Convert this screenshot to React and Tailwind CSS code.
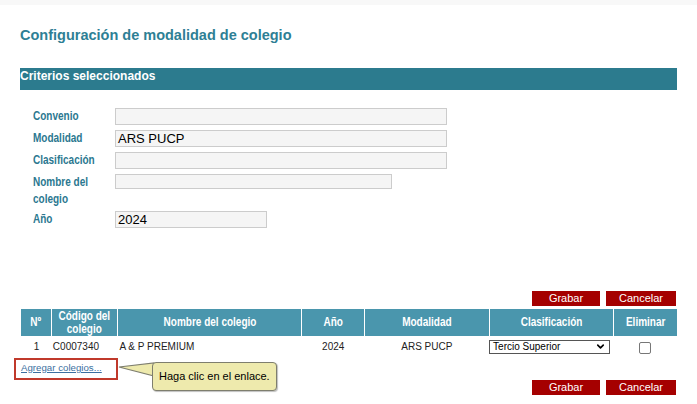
import { ChevronDown } from 'lucide-react'

const CAMPOS = [
  { label: 'Convenio', value: '', w: 'w-[332px]' },
  { label: 'Modalidad', value: 'ARS PUCP', w: 'w-[332px]' },
  { label: 'Clasificación', value: '', w: 'w-[332px]' },
  { label: ['Nombre del', 'colegio'], value: '', w: 'w-[277px]', small: true },
  { label: 'Año', value: '2024', w: 'w-[152px]' },
]

const COLUMNAS = [
  { label: ['Nº'], w: 'w-[31px]' },
  { label: ['Código del', 'colegio'], w: 'w-[64px]' },
  { label: ['Nombre del colegio'], w: 'w-[185px]' },
  { label: ['Año'], w: 'w-[63px]' },
  { label: ['Modalidad'], w: 'w-[125px]' },
  { label: ['Clasificación'], w: 'w-[124px]' },
  { label: ['Eliminar'], w: 'w-[64px]' },
]

// texto "narrow": Arial bold comprimido
function Narrow({ lines, className = '' }) {
  return (
    <span className={`inline-block whitespace-nowrap scale-x-[0.8] ${className}`}>
      {lines.map((l, i) => <span key={i} className="block">{l}</span>)}
    </span>
  )
}

function Botones() {
  return (
    <div className="flex justify-end gap-[6px] pr-[1px]">
      <button className="w-[68px] h-[15px] bg-[#a50000] text-white text-[11px] leading-[15px]">Grabar</button>
      <button className="w-[70px] h-[15px] bg-[#a50000] text-white text-[11px] leading-[15px]">Cancelar</button>
    </div>
  )
}

function Campo({ label, value, w, small }) {
  const lines = Array.isArray(label) ? label : [label]
  return (
    <div className={`flex items-start ${small ? 'mb-[-2px]' : ''}`}>
      <label className="w-[82px] shrink-0 text-[12.5px] font-bold text-[#2b7890] leading-[17px]">
        <Narrow lines={lines} className="origin-left" />
      </label>
      <div className={`${w} ${small ? 'h-[15px]' : 'h-[17px]'} bg-[#f5f5f5] border border-[#cccccc] text-[13px] text-black leading-[15px] px-[2px]`}>
        {value}
      </div>
    </div>
  )
}

export default function App() {
  return (
    <div className="w-[697px] h-[404px] bg-white overflow-hidden" style={{ fontFamily: '"Liberation Sans", Arial, sans-serif' }}>
      <div className="h-[5px] bg-[#f8f8f8]" />
      <div className="px-[20px]">
        <h1 className="mt-[21px] text-[14.5px] font-bold text-[#2e7f95] leading-[18px]">
          Configuración de modalidad de colegio
        </h1>

        <div className="mt-[24px] h-[22px] bg-[#2c7b8e] text-white text-[12px] font-bold leading-[15px] pt-[1px]">
          Criterios seleccionados
        </div>

        {/* Criterios */}
        <div className="mt-[18px] pl-[13px] flex flex-col gap-[5px]">
          {CAMPOS.map((c, i) => <Campo key={i} {...c} />)}
        </div>

        <div className="mt-[63px]">
          <Botones />
        </div>

        {/* Tabla */}
        <table className="mt-[3px] ml-[1px] border-collapse text-[10px]">
          <thead>
            <tr>
              {COLUMNAS.map((col, i) => (
                <th
                  key={i}
                  className={`${col.w} h-[27px] p-0 bg-[#4a96ad] text-white text-[12.5px] font-bold leading-[13px] text-center ${i > 0 ? 'border-l border-white' : ''}`}
                >
                  <Narrow lines={col.label} />
                </th>
              ))}
            </tr>
          </thead>
          <tbody>
            <tr className="h-[21px] text-[#222]">
              <td className="text-center">1</td>
              <td className="pl-[1px]">C0007340</td>
              <td className="pl-[2px]">A &amp; P PREMIUM</td>
              <td className="text-center">2024</td>
              <td className="text-center">ARS PUCP</td>
              <td>
                <div className="w-[121px] h-[14px] border border-[#555] flex items-center justify-between pl-[3px] pr-[3px] text-[10px] text-black leading-[12px] bg-white">
                  <span>Tercio Superior</span>
                  <ChevronDown size={11} strokeWidth={3.5} />
                </div>
              </td>
              <td>
                <div className="mx-auto w-[12px] h-[12px] border border-[#777] rounded-[2px] bg-white mt-[3px]" />
              </td>
            </tr>
          </tbody>
        </table>

        {/* Enlace con ayuda */}
        <div className="relative mt-[1px] h-[22px]">
          <div className="absolute left-[-6px] top-[0px] w-[104px] h-[22px] border-2 border-[#c0392b]" />
          <a href="#" className="absolute left-[1px] top-[4px] text-[9.7px] text-[#3b6fa0] underline leading-[12px]">
            Agregar colegios...
          </a>
          <svg className="absolute left-[98px] top-[2px]" width="40" height="18" viewBox="0 0 40 18">
            <polygon points="1,7 36,3 36,16" fill="#eeeaad" stroke="#7e7e6e" strokeWidth="1.2" />
          </svg>
          <div className="absolute left-[132px] top-[4px] w-[125px] h-[29px] bg-[#eeeaad] border-[1.5px] border-[#7e7e6e] rounded-[4px] shadow-[1px_1px_1px_rgba(0,0,0,0.25)] text-[11px] text-black leading-[26px] pl-[6px]">
            Haga clic en el enlace.
          </div>
        </div>

        <div className="mt-[0px]">
          <Botones />
        </div>
      </div>
    </div>
  )
}
